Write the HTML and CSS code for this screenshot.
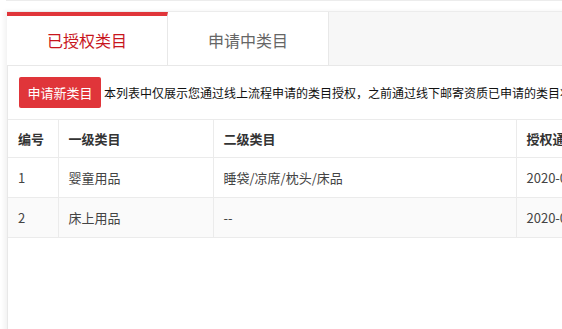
FILE: index.html
```html
<!DOCTYPE html>
<html lang="zh-CN">
<head>
<meta charset="utf-8">
<link rel="stylesheet" href="styles.css">
</head>
<body>
<div class="page">
  <div class="topline"></div>
  <div class="card">
    <div class="tabs">
      <div class="tab active">已授权类目</div>
      <div class="tab">申请中类目</div>
      <div class="tab-rest"></div>
    </div>
    <div class="content">
      <div class="toolbar">
        <button class="btn">申请新类目</button>
        <span class="note">本列表中仅展示您通过线上流程申请的类目授权，之前通过线下邮寄资质已申请的类目将不在此处展示</span>
      </div>
      <table class="grid">
        <colgroup>
          <col class="c1"><col class="c2"><col class="c3"><col class="c4">
        </colgroup>
        <thead>
          <tr><th>编号</th><th>一级类目</th><th>二级类目</th><th>授权通过时间</th></tr>
        </thead>
        <tbody>
          <tr><td>1</td><td>婴童用品</td><td>睡袋/凉席/枕头/床品</td><td>2020-06-18</td></tr>
          <tr class="alt"><td>2</td><td>床上用品</td><td>--</td><td>2020-06-18</td></tr>
        </tbody>
      </table>
    </div>
  </div>
</div>
</body>
</html>
```

FILE: styles.css
```css
html, body {
  margin: 0;
  padding: 0;
  overflow: hidden;
  background: #fff;
  height: 100%;
}
body {
  font-family: "Noto Sans CJK SC", "Microsoft YaHei", sans-serif;
  color: #333;
}
.page {
  padding-left: 7px;
  height: 100%;
  box-sizing: border-box;
}
.topline {
  height: 1px;
  background: #ececec;
  margin-left: -1px;
  width: 800px;
}
.card {
  margin-top: 10px;
  width: 900px;
  height: 400px;
  box-shadow: -3px 0 4px rgba(0, 0, 0, 0.05);
  border-left: 1px solid #e8e8e8;
}
.tabs {
  display: flex;
  height: 55px;
  margin-left: -1px;
  border-top: 1px solid #ececec;
  border-bottom: 1px solid #e8e8e8;
  box-sizing: border-box;
}
.tab {
  width: 161px;
  flex: none;
  background: #fff;
  border-right: 1px solid #e8e8e8;
  display: flex;
  align-items: center;
  justify-content: center;
  font-size: 16px;
  color: #666;
  box-sizing: border-box;
}
.tab.active {
  border-top: 4px solid #e0353a;
  color: #c8161d;
  padding-bottom: 2px;
}
.tab + .tab {
  padding-top: 2px;
}
.tab-rest {
  flex: 1;
  background: #f7f7f7;
}
.content {
  padding-top: 11px;
}
.toolbar {
  display: flex;
  align-items: center;
  padding-left: 11px;
  height: 31px;
  white-space: nowrap;
}
.btn {
  width: 82px;
  height: 31px;
  border: none;
  border-radius: 2px;
  background: #e0353a;
  color: #fff;
  font-family: inherit;
  font-size: 13px;
  padding: 0;
  margin-right: 3px;
  flex: none;
}
.note {
  font-size: 12px;
  color: #111;
}
.grid {
  margin-top: 11px;
  border-collapse: collapse;
  table-layout: fixed;
  width: 800px;
  font-size: 13px;
}
.c1 { width: 50px; }
.c2 { width: 155px; }
.c3 { width: 303px; }
.c4 { width: 292px; }
.grid th, .grid td {
  text-align: left;
  padding: 0 10px;
  border-top: 1px solid #ebebeb;
  border-bottom: 1px solid #ebebeb;
  border-left: 1px solid #ebebeb;
  white-space: nowrap;
}
.grid th:first-child, .grid td:first-child {
  border-left: none;
}
.grid th {
  height: 37px;
  font-weight: bold;
  color: #333;
}
.grid td {
  height: 39px;
  color: #444;
}
.grid tr.alt td {
  background: #fafafa;
}
```
